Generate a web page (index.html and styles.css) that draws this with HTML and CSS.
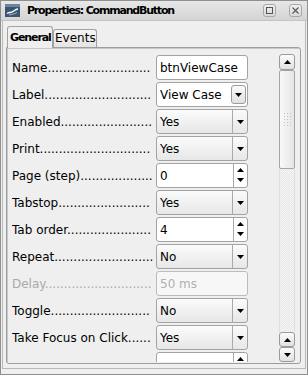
FILE: index.html
```html
<!DOCTYPE html>
<html lang="en">
<head>
<meta charset="UTF-8">
<title>Properties: CommandButton</title>
<link rel="stylesheet" href="styles.css">
<script>
    // fill each label with leader dots, as many as fit in the column
    document.addEventListener('DOMContentLoaded', function() {
        document.querySelectorAll('.label').forEach(label => {
            const name = label.textContent.trim();
            if (!name) return;
            let dots = '';
            label.textContent = name;
            while (label.scrollWidth <= label.clientWidth) {
                dots += '.';
                label.textContent = name + dots;
            }
            label.textContent = name + dots.slice(0, -1);
        });
    });
</script>
</head>
<body>
<div class="window">
    <div class="titlebar">
        <svg class="app-icon" viewBox="0 0 15 13">
            <rect x="0" y="0" width="15" height="13" fill="#3a5672"/>
            <rect x="0" y="0" width="15" height="3" fill="#6d859c"/>
            <path d="M2 9.5 C4 8, 6 9, 8 7.5 S11 5, 13 5" stroke="#fff" stroke-width="1.3" fill="none"/>
            <path d="M4 11 C7 10, 9 10.5, 12 8.5" stroke="#b9c6d3" stroke-width="0.8" fill="none"/>
        </svg>
        <span class="title">Properties: CommandButton</span>
        <span class="wbtn">
            <svg width="7" height="7" viewBox="0 0 7 7"><rect x="0.5" y="0.5" width="6" height="6" fill="none" stroke="#555"/></svg>
        </span>
        <span class="wbtn">
            <svg width="7" height="7" viewBox="0 0 7 7"><path d="M0.5 0.5L6.5 6.5M6.5 0.5L0.5 6.5" stroke="#555" stroke-width="1.1"/></svg>
        </span>
    </div>

    <div class="client">
        <div class="tabs">
            <div class="tab active">General</div>
            <div class="tab">Events</div>
        </div>

        <div class="pane">
            <div class="sheet">
                <div class="row">
                    <div class="label">Name</div>
                    <div class="field text">btnViewCase</div>
                </div>
                <div class="row">
                    <div class="label">Label</div>
                    <div class="field edit-combo"><span class="val">View Case</span><span class="mini-btn"><svg width="7" height="4" viewBox="0 0 7 4"><path d="M0 0H7L3.5 4Z"/></svg></span></div>
                </div>
                <div class="row">
                    <div class="label">Enabled</div>
                    <div class="field combo"><span class="val">Yes</span><span class="drop"><svg width="7" height="4" viewBox="0 0 7 4"><path d="M0 0H7L3.5 4Z"/></svg></span></div>
                </div>
                <div class="row">
                    <div class="label">Print</div>
                    <div class="field combo"><span class="val">Yes</span><span class="drop"><svg width="7" height="4" viewBox="0 0 7 4"><path d="M0 0H7L3.5 4Z"/></svg></span></div>
                </div>
                <div class="row">
                    <div class="label">Page (step)</div>
                    <div class="field spin"><span class="val">0</span><span class="spin-btns"><svg width="7" height="4" viewBox="0 0 7 4"><path d="M0 4H7L3.5 0Z"/></svg><svg width="7" height="4" viewBox="0 0 7 4"><path d="M0 0H7L3.5 4Z"/></svg></span></div>
                </div>
                <div class="row">
                    <div class="label">Tabstop</div>
                    <div class="field combo"><span class="val">Yes</span><span class="drop"><svg width="7" height="4" viewBox="0 0 7 4"><path d="M0 0H7L3.5 4Z"/></svg></span></div>
                </div>
                <div class="row">
                    <div class="label">Tab order</div>
                    <div class="field spin"><span class="val">4</span><span class="spin-btns"><svg width="7" height="4" viewBox="0 0 7 4"><path d="M0 4H7L3.5 0Z"/></svg><svg width="7" height="4" viewBox="0 0 7 4"><path d="M0 0H7L3.5 4Z"/></svg></span></div>
                </div>
                <div class="row">
                    <div class="label">Repeat</div>
                    <div class="field combo"><span class="val">No</span><span class="drop"><svg width="7" height="4" viewBox="0 0 7 4"><path d="M0 0H7L3.5 4Z"/></svg></span></div>
                </div>
                <div class="row disabled">
                    <div class="label">Delay</div>
                    <div class="field text">50 ms</div>
                </div>
                <div class="row">
                    <div class="label">Toggle</div>
                    <div class="field combo"><span class="val">No</span><span class="drop"><svg width="7" height="4" viewBox="0 0 7 4"><path d="M0 0H7L3.5 4Z"/></svg></span></div>
                </div>
                <div class="row">
                    <div class="label">Take Focus on Click</div>
                    <div class="field combo"><span class="val">Yes</span><span class="drop"><svg width="7" height="4" viewBox="0 0 7 4"><path d="M0 0H7L3.5 4Z"/></svg></span></div>
                </div>
                <div class="row">
                    <div class="label"></div>
                    <div class="field spin"><span class="val"></span><span class="spin-btns"><svg width="7" height="4" viewBox="0 0 7 4"><path d="M0 4H7L3.5 0Z"/></svg><svg width="7" height="4" viewBox="0 0 7 4"><path d="M0 0H7L3.5 4Z"/></svg></span></div>
                </div>
            </div>

            <div class="vscroll">
                <div class="sb-btn top"><svg width="7" height="4" viewBox="0 0 7 4"><path d="M0 4H7L3.5 0Z"/></svg></div>
                <div class="thumb"><div class="grip"></div></div>
                <div class="track"></div>
                <div class="sb-btn small"><svg width="7" height="4" viewBox="0 0 7 4"><path d="M0 4H7L3.5 0Z"/></svg></div>
                <div class="sb-btn small"><svg width="7" height="4" viewBox="0 0 7 4"><path d="M0 0H7L3.5 4Z"/></svg></div>
            </div>
        </div>
    </div>
</div>
</body>
</html>
```

FILE: styles.css
```css
html, body {
    margin: 0;
    padding: 0;
    background-color: #efefef;
}

body {
    font-family: "DejaVu Sans", sans-serif;
    font-size: 12px;
    color: #000;
}

.window {
    width: 308px;
    height: 375px;
    box-sizing: border-box;
    border: 1px solid #8f8f8f;
    background: #efefef;
    display: flex;
    flex-direction: column;
}

/* title bar */
.titlebar {
    height: 20px;
    box-sizing: border-box;
    display: flex;
    align-items: center;
    padding: 0 5px 0 4px;
    background: linear-gradient(#e7e7e7, #d4d4d4);
    border-bottom: 1px solid #c4c4c4;
}
.app-icon {
    width: 15px;
    height: 13px;
    margin-right: 7px;
    flex: none;
}
.title {
    flex: 1;
    font-weight: bold;
    font-size: 11px;
    letter-spacing: -1.2px;
    white-space: nowrap;
}
.wbtn {
    width: 13px;
    height: 13px;
    box-sizing: border-box;
    border: 1px solid #a8a8a8;
    border-radius: 3px;
    background: linear-gradient(#efefef, #d9d9d9);
    display: flex;
    align-items: center;
    justify-content: center;
    margin-left: 13px;
}

/* window body */
.client {
    flex: 1;
    min-height: 0;
    display: flex;
    flex-direction: column;
    margin: 0 1px 5px;
    border: 1px solid #b9b9b9;
    border-top: none;
    padding: 5px 4px 4px 3px;
}

.tabs {
    display: flex;
    align-items: flex-end;
    height: 22px;
    padding-left: 1px;
    margin-bottom: -1px;
    position: relative;
    z-index: 1;
}
.tab {
    width: 44px;
    height: 18px;
    box-sizing: border-box;
    margin-bottom: 1px;
    padding-left: 1px;
    border: 1px solid #a2a2a2;
    border-bottom: none;
    border-radius: 3px 3px 0 0;
    background: linear-gradient(#f5f5f5, #e4e4e4);
    line-height: 17px;
}
.tab.active {
    width: 46px;
    height: 22px;
    margin-bottom: 0;
    padding-left: 2px;
    background: #efefef;
    font-weight: bold;
    font-size: 11px;
    letter-spacing: -1.1px;
    line-height: 21px;
}

.pane {
    flex: 1;
    min-height: 0;
    display: flex;
    border: 1px solid #9d9d9d;
    border-radius: 0 3px 3px 3px;
    box-shadow: inset 1px 1px 0 #c9c9c9;
}

.sheet {
    flex: 1;
    overflow: hidden;
    padding: 7px 0 0 5px;
    margin-bottom: 1px;
}

.row {
    display: flex;
    align-items: center;
    height: 25px;
    margin-bottom: 2px;
}
.label {
    width: 141px;
    margin-right: 3px;
    overflow: hidden;
    white-space: nowrap;
}
.row.disabled .label {
    color: #a9a9a9;
}

.field {
    width: 92px;
    height: 25px;
    box-sizing: border-box;
    border: 1px solid #a3a3a3;
    border-radius: 3px;
    display: flex;
    align-items: center;
    white-space: nowrap;
}
.field .val {
    flex: 1;
    padding-left: 3px;
}
.field.text {
    background: #fff;
    padding-left: 3px;
}
.row.disabled .field.text {
    background: #f7f7f7;
    border-color: #bcbcbc;
    color: #b0b0b0;
}

.combo {
    background: linear-gradient(#fbfbfb, #e7e7e7);
}
.combo .drop {
    width: 14px;
    height: 100%;
    border-left: 1px solid #a9a9a9;
    display: flex;
    align-items: center;
    justify-content: center;
}

.edit-combo {
    background: #fff;
}
.mini-btn {
    width: 15px;
    height: 19px;
    box-sizing: border-box;
    margin-right: 1px;
    border: 1px solid #9c9c9c;
    border-radius: 3px;
    background: linear-gradient(#fafafa, #e2e2e2);
    display: flex;
    align-items: center;
    justify-content: center;
}

.spin {
    background: #fff;
}
.spin-btns {
    width: 14px;
    height: 100%;
    box-sizing: border-box;
    padding: 4px 0 5px;
    border-left: 1px solid #a9a9a9;
    display: flex;
    flex-direction: column;
    align-items: center;
    justify-content: space-between;
}

/* scroll bar */
.vscroll {
    width: 16px;
    flex: none;
    margin: 6px 5px 1px 0;
    display: flex;
    flex-direction: column;
}
.sb-btn {
    height: 16px;
    box-sizing: border-box;
    border: 1px solid #9a9a9a;
    border-radius: 3px;
    background: linear-gradient(#fcfcfc, #e1e1e1);
    display: flex;
    align-items: center;
    justify-content: center;
}
.sb-btn.small {
    height: 15px;
}
.thumb {
    height: 99px;
    box-sizing: border-box;
    border: 1px solid #a5a5a5;
    border-radius: 2px;
    background: linear-gradient(90deg, #f9f9f9, #e5e5e5);
    display: flex;
    align-items: center;
    justify-content: center;
}
.grip {
    width: 9px;
    height: 15px;
    background-image: radial-gradient(circle, #c4c4c4 0.8px, transparent 1px);
    background-size: 3px 3px;
}
.track {
    flex: 1;
    border-left: 1px solid #dedede;
    border-right: 1px solid #dedede;
    background: repeating-conic-gradient(#f4f4f4 0 25%, #e9e9e9 0 50%) 0 0 / 2px 2px;
}
```
